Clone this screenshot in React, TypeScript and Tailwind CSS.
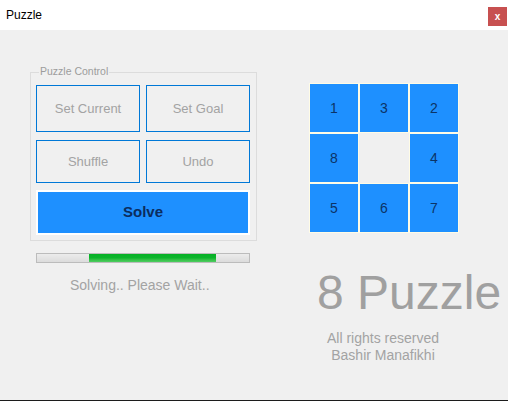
import React from 'react';

const tiles: (number | null)[] = [1, 3, 2, 8, null, 4, 5, 6, 7];

function ControlButton({ label, height }: { label: string; height: string }) {
  return (
    <button
      className={`w-[104px] ${height} border border-[#0078d7] bg-[#f0f0f0] text-[13px] text-[#a3a3a3] flex items-center justify-center`}
    >
      {label}
    </button>
  );
}

export default function App() {
  return (
    <div
      className="w-[508px] h-[401px] flex flex-col bg-[#f0f0f0] overflow-hidden"
      style={{ fontFamily: '"Liberation Sans", Arial, sans-serif' }}
    >
      {/* Title bar */}
      <div className="h-[30px] bg-white flex items-start justify-between shrink-0">
        <span className="ml-[6px] mt-[8px] text-[12px] leading-[14px] text-black">Puzzle</span>
        <button className="mt-[7px] mr-[1px] w-[19px] h-[19px] bg-[#c75050] text-white text-[10px] font-bold leading-none flex items-center justify-center">
          x
        </button>
      </div>

      {/* Client area */}
      <div className="flex-1 flex items-start border-b border-[#1c1c1c]">
        {/* Left column */}
        <div className="ml-[30px] mt-[42px] w-[227px] flex flex-col">
          <div className="relative border border-[#dcdcdc] pt-[12px] pl-[5px] pr-[6px] pb-[5px] flex flex-col">
            <span className="absolute left-[8px] top-[-8px] px-[1px] bg-[#f0f0f0] text-[10.5px] leading-[12px] text-[#9c9c9c]">
              Puzzle Control
            </span>
            <div className="flex gap-[6px]">
              <ControlButton label="Set Current" height="h-[47px]" />
              <ControlButton label="Set Goal" height="h-[47px]" />
            </div>
            <div className="flex gap-[6px] mt-[8px]">
              <ControlButton label="Shuffle" height="h-[43px]" />
              <ControlButton label="Undo" height="h-[43px]" />
            </div>
            <button className="mt-[7px] w-[214px] h-[45px] border-2 border-white bg-[#1e90ff] text-[15px] font-bold text-[#0b2d5e] flex items-center justify-center">
              Solve
            </button>
          </div>

          {/* Progress bar */}
          <div className="mt-[12px] ml-[6px] w-[214px] h-[10px] border border-[#bcbcbc] bg-gradient-to-b from-[#ececec] to-[#dcdcdc] flex">
            <div className="ml-[52px] w-[127px] h-full bg-gradient-to-b from-[#06b025] via-[#0bb52c] to-[#4fce62]" />
          </div>

          <span className="mt-[14px] ml-[40px] text-[14px] leading-[16px] text-[#a3a3a3]">
            Solving.. Please Wait..
          </span>
        </div>

        {/* Right column */}
        <div className="ml-[52px] mt-[53px] flex flex-col">
          <div className="grid grid-cols-3 w-[150px]">
            {tiles.map((t, i) =>
              t === null ? (
                <div key={i} className="w-[50px] h-[50px]" />
              ) : (
                <div
                  key={i}
                  className="w-[50px] h-[50px] border border-[#fffce6] bg-[#1e90ff] flex items-center justify-center text-[14px] text-[#0c3466]"
                >
                  {t}
                </div>
              )
            )}
          </div>

          <div className="mt-[36px] ml-[8px] text-[48px] leading-[48px] text-[#a0a0a0] whitespace-nowrap">
            8 Puzzle
          </div>

          <div className="mt-[13px] ml-[9px] w-[130px] flex flex-col items-center text-[14px] leading-[17px] text-[#a3a3a3] whitespace-nowrap">
            <span>All rights reserved</span>
            <span>Bashir Manafikhi</span>
          </div>
        </div>
      </div>
    </div>
  );
}
